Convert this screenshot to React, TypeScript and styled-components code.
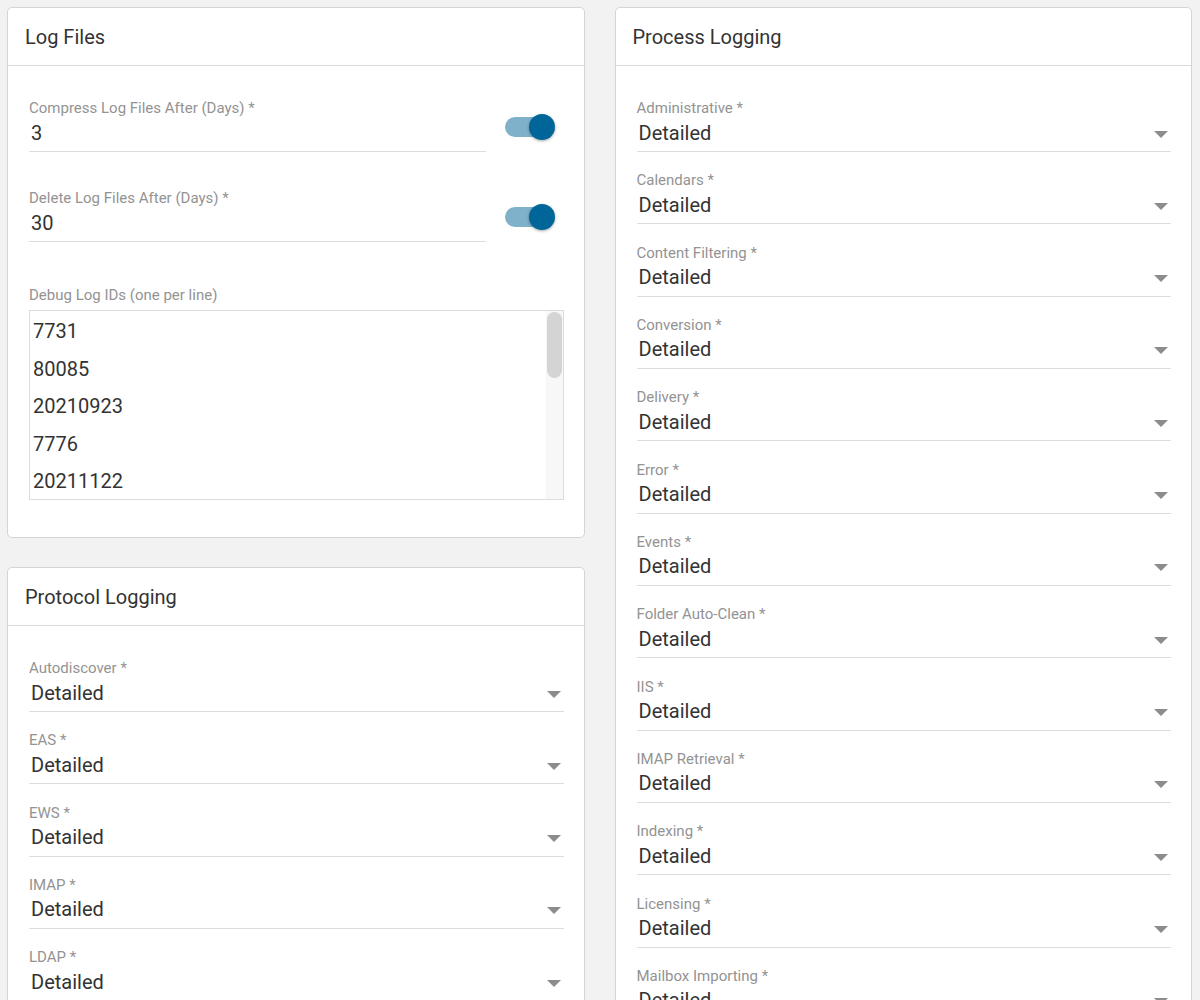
import React from "react";
import styled, { createGlobalStyle } from "styled-components";

const GlobalStyle = createGlobalStyle`
    html, body {
        margin: 0;
        padding: 0;
        overflow: hidden; /* no page scrollbar, the shot is the viewport */
        background: #f2f2f2;
        font-family: Roboto, "Noto Sans", "Liberation Sans", sans-serif;
    }
    * { box-sizing: border-box; }
`;

const Page = styled.div`
    display: grid;
    grid-template-columns: 1fr 1fr;
    column-gap: 30px;
    padding: 7px 8px 0 7px;
    align-items: start;
`;

const Column = styled.div`
    display: flex;
    flex-direction: column;
    gap: 29px;
`;

const Card = styled.section`
    background: #fff;
    border: 1px solid #d5d5d5;
    border-radius: 5px;
`;

const CardHeader = styled.header`
    height: 58px;
    display: flex;
    align-items: center;
    padding: 0 17px;
    border-bottom: 1px solid #dadada;
    font-size: 20px;
    color: #333;
`;

const CardBody = styled.div`
    padding: 34px 20px 37px 21px;
`;

const FieldRow = styled.div<{ $gap?: number }>`
    display: flex;
    align-items: center;
    margin-bottom: ${(p) => (p.$gap ?? 0)}px;
`;

const Field = styled.div<{ $gap?: number }>`
    flex: 1;
    margin-bottom: ${(p) => (p.$gap ?? 0)}px;
`;

const Label = styled.div`
    font-size: 15px;
    line-height: 17px;
    color: #939393;
    white-space: nowrap;
`;

const Value = styled.div`
    display: flex;
    align-items: center;
    justify-content: space-between;
    height: 35px;
    padding: 3px 0 5px 2px;
    font-size: 20px;
    line-height: 27px;
    color: #333;
    border-bottom: 1px solid #dcdcdc;
`;

const SwitchWrap = styled.div`
    width: 78px;
    padding-left: 19px;
    margin-top: 2px;
`;

const Switch = styled.div`
    position: relative;
    width: 51px;
    height: 28px;
`;

const Track = styled.span`
    position: absolute;
    left: 0;
    top: 4px;
    width: 44px;
    height: 20px;
    border-radius: 10px;
    background: #7fb1cb;
`;

const Thumb = styled.span`
    position: absolute;
    right: 1px;
    top: 1px;
    width: 26px;
    height: 26px;
    border-radius: 50%;
    background: #006699;
    box-shadow: 0 1px 3px rgba(0, 0, 0, 0.35);
`;

const AreaLabel = styled(Label)`
    margin-top: 45px;
`;

const IdBox = styled.div`
    display: flex;
    height: 190px;
    margin-top: 6px;
    border: 1px solid #dcdcdc;
`;

const IdArea = styled.textarea`
    flex: 1;
    display: block;
    height: 100%;
    padding: 2px 3px;
    border: none;
    resize: none;
    outline: none;
    overflow: hidden;
    font-family: Roboto, "Noto Sans", "Liberation Sans", sans-serif;
    font-size: 20px;
    line-height: 37.5px;
    color: #333;
`;

const ScrollRail = styled.div`
    width: 17px;
    flex: none;
    padding: 1px 1px;
    background: #f7f7f7;
`;

const ScrollThumb = styled.div`
    height: 66px;
    border-radius: 8px;
    background: #d4d4d4;
`;

const Arrow = styled.svg`
    width: 14px;
    height: 7px;
    margin-right: 3px;
    margin-top: 2px;
    flex: none;
`;

function DropArrow() {
    return (
        <Arrow viewBox="0 0 14 7">
            <path d="M0 0h14L7 7z" fill="#8c8c8c" />
        </Arrow>
    );
}

function SelectField({ label, value }: { label: string; value: string }) {
    return (
        <Field $gap={20.33}>
            <Label>{label} *</Label>
            <Value>
                <span>{value}</span>
                <DropArrow />
            </Value>
        </Field>
    );
}

function DaysField({ label, value, gap }: { label: string; value: string; gap?: number }) {
    return (
        <FieldRow $gap={gap}>
            <Field>
                <Label>{label} *</Label>
                <Value>{value}</Value>
            </Field>
            <SwitchWrap>
                <Switch>
                    <Track />
                    <Thumb />
                </Switch>
            </SwitchWrap>
        </FieldRow>
    );
}

const debugIds = [
    "7731", "80085", "20210923", "7776", "20211122", "4410", "90210",
    "20220104", "3141", "55012", "20220318", "8008", "12345", "20220601",
];

const protocols = ["Autodiscover", "EAS", "EWS", "IMAP", "LDAP", "MAPI", "POP", "SMTP", "WebDAV"];

const processes = [
    "Administrative", "Calendars", "Content Filtering", "Conversion", "Delivery",
    "Error", "Events", "Folder Auto-Clean", "IIS", "IMAP Retrieval", "Indexing",
    "Licensing", "Mailbox Importing", "Maintenance", "POP Retrieval", "Spam Filtering",
];

export default function App() {
    return (
        <>
            <GlobalStyle />
            <Page>
                <Column>
                    <Card>
                        <CardHeader>Log Files</CardHeader>
                        <CardBody>
                            <DaysField label="Compress Log Files After (Days)" value="3" gap={38} />
                            <DaysField label="Delete Log Files After (Days)" value="30" />
                            <AreaLabel>Debug Log IDs (one per line)</AreaLabel>
                            <IdBox>
                                <IdArea defaultValue={debugIds.join("\n")} />
                                <ScrollRail>
                                    <ScrollThumb />
                                </ScrollRail>
                            </IdBox>
                        </CardBody>
                    </Card>
                    <Card>
                        <CardHeader>Protocol Logging</CardHeader>
                        <CardBody>
                            {protocols.map((p) => (
                                <SelectField key={p} label={p} value="Detailed" />
                            ))}
                        </CardBody>
                    </Card>
                </Column>
                <Column>
                    <Card>
                        <CardHeader>Process Logging</CardHeader>
                        <CardBody>
                            {processes.map((p) => (
                                <SelectField key={p} label={p} value="Detailed" />
                            ))}
                        </CardBody>
                    </Card>
                </Column>
            </Page>
        </>
    );
}
